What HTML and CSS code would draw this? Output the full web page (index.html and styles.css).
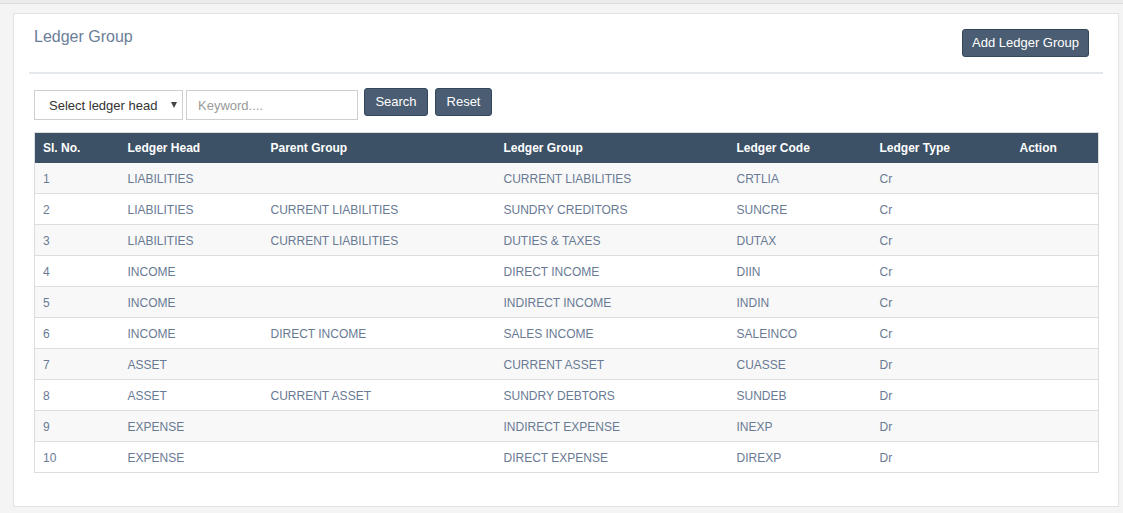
FILE: index.html
```html
<!DOCTYPE html>
<html>
<head>
<meta charset="utf-8">
<link rel="stylesheet" href="styles.css">
</head>
<body>
<div class="topbar"></div>
<div class="page">
  <div class="card">
    <div class="card-head">
      <h2 class="title">Ledger Group</h2>
      <button class="btn btn-add">Add Ledger Group</button>
    </div>
    <div class="card-body">
      <div class="filters">
        <div class="select-wrap">
          <select class="select"><option>Select ledger head</option></select>
        </div>
        <input class="input" type="text" placeholder="Keyword....">
        <button class="btn btn-sm btn-search">Search</button>
        <button class="btn btn-sm btn-reset">Reset</button>
      </div>
      <table class="grid">
        <colgroup>
          <col class="c1"><col class="c2"><col class="c3"><col class="c4"><col class="c5"><col class="c6"><col class="c7">
        </colgroup>
        <thead>
          <tr><th>Sl. No.</th><th>Ledger Head</th><th>Parent Group</th><th>Ledger Group</th><th>Ledger Code</th><th>Ledger Type</th><th>Action</th></tr>
        </thead>
        <tbody>
          <tr><td>1</td><td>LIABILITIES</td><td></td><td>CURRENT LIABILITIES</td><td>CRTLIA</td><td>Cr</td><td></td></tr>
          <tr><td>2</td><td>LIABILITIES</td><td>CURRENT LIABILITIES</td><td>SUNDRY CREDITORS</td><td>SUNCRE</td><td>Cr</td><td></td></tr>
          <tr><td>3</td><td>LIABILITIES</td><td>CURRENT LIABILITIES</td><td>DUTIES &amp; TAXES</td><td>DUTAX</td><td>Cr</td><td></td></tr>
          <tr><td>4</td><td>INCOME</td><td></td><td>DIRECT INCOME</td><td>DIIN</td><td>Cr</td><td></td></tr>
          <tr><td>5</td><td>INCOME</td><td></td><td>INDIRECT INCOME</td><td>INDIN</td><td>Cr</td><td></td></tr>
          <tr><td>6</td><td>INCOME</td><td>DIRECT INCOME</td><td>SALES INCOME</td><td>SALEINCO</td><td>Cr</td><td></td></tr>
          <tr><td>7</td><td>ASSET</td><td></td><td>CURRENT ASSET</td><td>CUASSE</td><td>Dr</td><td></td></tr>
          <tr><td>8</td><td>ASSET</td><td>CURRENT ASSET</td><td>SUNDRY DEBTORS</td><td>SUNDEB</td><td>Dr</td><td></td></tr>
          <tr><td>9</td><td>EXPENSE</td><td></td><td>INDIRECT EXPENSE</td><td>INEXP</td><td>Dr</td><td></td></tr>
          <tr><td>10</td><td>EXPENSE</td><td></td><td>DIRECT EXPENSE</td><td>DIREXP</td><td>Dr</td><td></td></tr>
        </tbody>
      </table>
    </div>
  </div>
</div>
</body>
</html>
```

FILE: styles.css
```css
* { box-sizing: border-box; }
html, body { margin: 0; padding: 0; }
body {
  background: #f4f4f4;
  font-family: "Liberation Sans", Arial, sans-serif;
  font-size: 12px;
  color: #333;
  height: 513px;
  overflow: hidden;
}
.topbar {
  height: 4px;
  background: #ebebeb;
  border-bottom: 1px solid #dcdcdc;
}
.page {
  padding: 9px 4px 0 13px;
}
.card {
  background: #fff;
  border: 1px solid #e3e3e3;
  height: 494px;
}
.card-head {
  margin: 0 15px;
  padding: 15px 14px 15px 5px;
  border-bottom: 2px solid #e4e8ec;
  display: flex;
  justify-content: space-between;
  align-items: flex-start;
}
.title {
  margin: -1px 0 0 0;
  font-size: 16px;
  line-height: 18px;
  font-weight: normal;
  color: #6b7e99;
}
.btn {
  font-family: "Liberation Sans", Arial, sans-serif;
  font-size: 13px;
  line-height: 18px;
  height: 28px;
  padding: 4px 10px;
  color: #fff;
  background: #4b5d72;
  border: 1px solid #34465a;
  border-radius: 3px;
  text-align: center;
}
.btn-add { padding: 4px 9px; }
.card-body {
  padding: 14px 20px 0 20px;
}
.filters {
  display: flex;
  align-items: flex-start;
  margin-bottom: 12px;
}
.select-wrap {
  position: relative;
  margin-top: 2px;
}
.select-wrap::after {
  content: "";
  position: absolute;
  right: 6px;
  top: 12px;
  border-left: 3.5px solid transparent;
  border-right: 3.5px solid transparent;
  border-top: 6px solid #444;
}
.select {
  appearance: none;
  -webkit-appearance: none;
  width: 149px;
  height: 30px;
  padding: 0 0 0 14px;
  border: 1px solid #cfcfcf;
  border-radius: 0;
  background: #fff;
  font-family: "Liberation Sans", Arial, sans-serif;
  font-size: 13px;
  color: #333;
}
.input {
  margin: 2px 0 0 3px;
  width: 172px;
  height: 30px;
  padding: 0 11px;
  border: 1px solid #cfcfcf;
  border-radius: 0;
  font-family: "Liberation Sans", Arial, sans-serif;
  font-size: 13px;
  color: #333;
}
.input::placeholder { color: #9a9a9a; }
.btn-sm { margin-left: 6px; padding: 4px 0; }
.btn-search { width: 64px; }
.btn-reset { width: 57px; margin-left: 7px; }
.grid {
  width: 1064px;
  border-collapse: collapse;
  table-layout: fixed;
  border: 1px solid #dddddd;
}
.c1 { width: 85px; }
.c2 { width: 143px; }
.c3 { width: 233px; }
.c4 { width: 233px; }
.c5 { width: 143px; }
.c6 { width: 140px; }
.c7 { width: 87px; }
.grid th {
  background: #3d5166;
  color: #fff;
  font-weight: bold;
  text-align: left;
  font-size: 12px;
  line-height: 18px;
  padding: 6px 8px;
}
.grid td {
  font-size: 12px;
  line-height: 18px;
  padding: 7px 8px 5px 8px;
  color: #697a94;
  border-bottom: 1px solid #dddddd;
  white-space: nowrap;
}
.grid tbody tr:nth-child(odd) td { background: #f8f8f8; }
.grid tbody tr:nth-child(even) td { background: #fff; }
```
